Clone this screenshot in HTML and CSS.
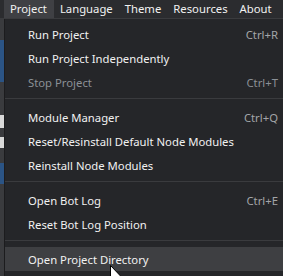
FILE: index.html
```html
<!DOCTYPE html>
<html lang="en">
<head>
  <meta charset="UTF-8">
  <title>Project menu</title>
  <link rel="stylesheet" href="styles.css">
</head>
<body>
  <div class="menubar">
    <div class="menubar-item active">Project</div>
    <div class="menubar-item">Language</div>
    <div class="menubar-item">Theme</div>
    <div class="menubar-item">Resources</div>
    <div class="menubar-item">About</div>
    <div class="menubar-item">Help</div>
  </div>

  <div class="workspace">
    <div class="backdrop">
      <div class="strip gray" style="height: 21px"></div>
      <div class="strip blue" style="height: 42px"></div>
      <div class="strip gray" style="height: 33px"></div>
      <div class="strip light" style="height: 13px"></div>
      <div class="strip gray" style="height: 9px"></div>
      <div class="strip light" style="height: 11px"></div>
      <div class="strip gray" style="height: 15px"></div>
      <div class="strip blue" style="height: 21px"></div>
      <div class="strip gray" style="height: 93px"></div>
    </div>

    <div class="dropdown">
      <div class="menu-item"><span>Run Project</span><span class="shortcut">Ctrl+R</span></div>
      <div class="menu-item"><span>Run Project Independently</span></div>
      <div class="menu-item disabled"><span>Stop Project</span><span class="shortcut">Ctrl+T</span></div>
      <div class="separator"></div>
      <div class="menu-item"><span>Module Manager</span><span class="shortcut">Ctrl+Q</span></div>
      <div class="menu-item"><span>Reset/Resinstall Default Node Modules</span></div>
      <div class="menu-item"><span>Reinstall Node Modules</span></div>
      <div class="separator"></div>
      <div class="menu-item"><span>Open Bot Log</span><span class="shortcut">Ctrl+E</span></div>
      <div class="menu-item"><span>Reset Bot Log Position</span></div>
      <div class="separator"></div>
      <div class="menu-item hover"><span>Open Project Directory</span></div>
    </div>
  </div>

  <svg class="cursor" width="12" height="19" viewBox="0 0 12 19">
    <path d="M0.5 0.5 L0.5 16 L4 12.5 L6.5 18 L8.5 17 L6 11.5 L11 11.5 Z" fill="#ffffff" stroke="#000000" stroke-width="1"/>
  </svg>
</body>
</html>
```

FILE: styles.css
```css
body {
  margin: 0;
  width: 283px;
  height: 276px;
  overflow: hidden;
  background: #252629;
  font-family: "Noto Sans", sans-serif;
  font-size: 11.3px;
  color: #f1f1f1;
  position: relative;
}
.menubar {
  display: flex;
  height: 18px;
  background: #2b2c2f;
  border-bottom: 1px solid #3a3b3e;
  padding-left: 4px;
  white-space: nowrap;
  overflow: hidden;
}
.menubar-item {
  padding: 0 6px;
  line-height: 17px;
}
.menubar-item.active {
  background: #3f4044;
  padding: 0 7px 0 6px;
}
.workspace {
  display: flex;
}
.backdrop {
  width: 4px;
  flex-shrink: 0;
  display: flex;
  flex-direction: column;
}
.strip.gray {
  background: #3a3b3e;
}
.strip.blue {
  background: #2b5485;
}
.strip.light {
  background: #d9d9d9;
}
.dropdown {
  width: 296px;
  flex-shrink: 0;
  background: #252629;
  border-left: 1px solid #1c1c1e;
  padding-top: 3px;
  height: 257px;
}
.menu-item {
  display: flex;
  justify-content: space-between;
  align-items: center;
  height: 24px;
  padding: 0 23px;
  white-space: nowrap;
}
.menu-item.disabled {
  color: #8b9096;
}
.menu-item.hover {
  background: #3e3f42;
}
.shortcut {
  color: #a3a5a8;
}
.menu-item.disabled .shortcut {
  color: #8b9096;
}
.separator {
  height: 1px;
  background: #3a3b3e;
  margin: 4px 0 6px;
}
.cursor {
  position: absolute;
  left: 110px;
  top: 265px;
}
```
